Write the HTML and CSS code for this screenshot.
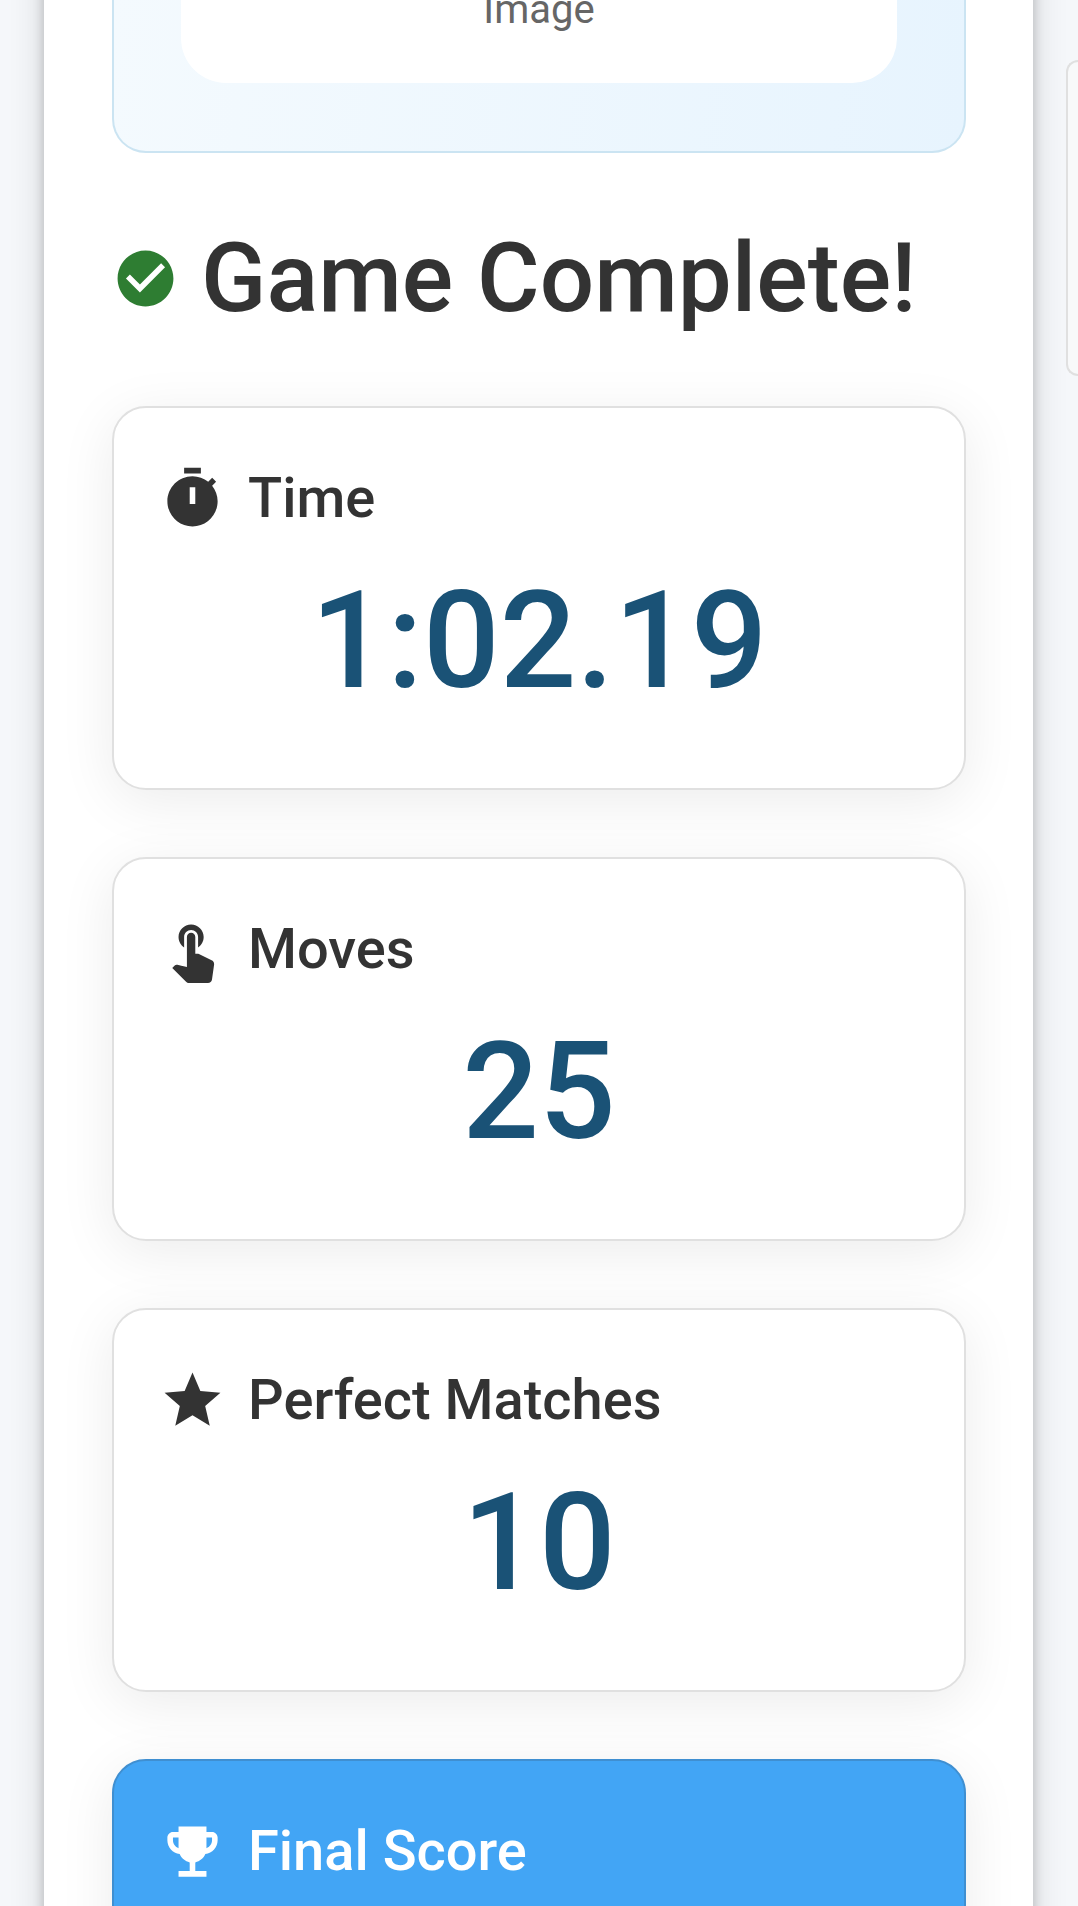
FILE: index.html
```html
<!DOCTYPE html>
<html lang="en">
<head>
  <meta charset="UTF-8">
  <meta name="viewport" content="width=device-width, initial-scale=1.0">
  <title>Game Complete</title>
  <link rel="stylesheet" href="styles.css">
</head>
<body>
  <main class="panel">
    <section class="preview">
      <div class="preview-inner">
        <p class="preview-label">Image</p>
      </div>
    </section>

    <h1 class="page-title">
      <svg class="icon icon-success" viewBox="0 0 24 24" aria-hidden="true"><path d="M12 2C6.48 2 2 6.48 2 12s4.48 10 10 10 10-4.48 10-10S17.52 2 12 2zm-2 15-5-5 1.41-1.41L10 14.17l7.59-7.59L19 8l-9 9z"/></svg>
      Game Complete!
    </h1>

    <div class="stats">
      <section class="card">
        <h2 class="card-title">
          <svg class="icon" viewBox="0 0 24 24" aria-hidden="true"><path d="M9 1h6v2H9zm10.03 6.39 1.42-1.42c-.43-.51-.9-.99-1.41-1.41l-1.42 1.42C16.07 4.74 14.12 4 12 4c-4.97 0-9 4.03-9 9s4.02 9 9 9 9-4.03 9-9c0-2.12-.74-4.07-1.97-5.61M13 14h-2V8h2z"/></svg>
          Time
        </h2>
        <p class="card-value">1:02.19</p>
      </section>

      <section class="card">
        <h2 class="card-title">
          <svg class="icon" viewBox="0 0 24 24" aria-hidden="true"><path d="M9 11.24V7.5C9 6.12 10.12 5 11.5 5S14 6.12 14 7.5v3.74c1.21-.81 2-2.18 2-3.74C16 5.01 13.99 3 11.5 3S7 5.01 7 7.5c0 1.56.79 2.93 2 3.74m9.84 4.63-4.54-2.26c-.17-.07-.35-.11-.54-.11H13v-6c0-.83-.67-1.5-1.5-1.5S10 6.67 10 7.5v10.74c-3.6-.76-3.54-.75-3.67-.75-.31 0-.59.13-.79.33l-.79.8 4.94 4.94c.27.27.65.44 1.06.44h6.79c.75 0 1.33-.55 1.44-1.28l.75-5.27c.01-.07.02-.14.02-.2 0-.62-.38-1.16-.91-1.38"/></svg>
          Moves
        </h2>
        <p class="card-value">25</p>
      </section>

      <section class="card">
        <h2 class="card-title">
          <svg class="icon" viewBox="0 0 24 24" aria-hidden="true"><path d="M12 17.27 18.18 21l-1.64-7.03L22 9.24l-7.19-.61L12 2 9.19 8.63 2 9.24l5.46 4.73L5.82 21z"/></svg>
          Perfect Matches
        </h2>
        <p class="card-value">10</p>
      </section>

      <section class="card card-score">
        <h2 class="card-title">
          <svg class="icon" viewBox="0 0 24 24" aria-hidden="true"><path d="M19 5h-2V3H7v2H5c-1.1 0-2 .9-2 2v1c0 2.55 1.92 4.63 4.39 4.94.63 1.5 1.98 2.63 3.61 2.96V19H7v2h10v-2h-4v-3.1c1.63-.33 2.98-1.46 3.61-2.96C19.08 12.63 21 10.55 21 8V7c0-1.1-.9-2-2-2M5 8V7h2v3.82C5.84 10.4 5 9.3 5 8m14 0c0 1.3-.84 2.4-2 2.82V7h2z"/></svg>
          Final Score
        </h2>
      </section>
    </div>
  </main>
  <aside class="side">
    <div class="side-box"></div>
  </aside>
</body>
</html>
```

FILE: styles.css
```css
* {
  box-sizing: border-box;
}
body {
  display: flex;
  gap: 33px;
  height: 100vh;
  margin: 0;
  padding-left: 44px;
  overflow: hidden;
  background-color: #f5f7fa;
  color: #333;
  font-family: Roboto, sans-serif;
}
h1, h2, p {
  margin: 0;
}
/* The panel runs past both edges so its shadow has no visible corner */
.panel {
  flex: 1;
  margin: -68px 0;
  padding: 68px 67px 68px 68px;
  background-color: white;
  box-shadow: 0 8px 11px rgba(0, 0, 0, 0.2), 0 3px 34px rgba(0, 0, 0, 0.14);
}

/* Preview, scrolled partly out of view */
.preview {
  padding: 0 67px 68px;
  border: 2px solid #cbe4f2;
  border-top: none;
  border-radius: 0 0 34px 34px;
  background: linear-gradient(95deg, #f4fafe, #e7f4fe);
}
.preview-inner {
  padding-bottom: 45px;
  border-radius: 0 0 45px 45px;
  background-color: white;
}
.preview-label {
  margin-top: -19px;
  color: #666;
  font-size: 40px;
  line-height: 57px;
  text-align: center;
}

.page-title {
  display: flex;
  align-items: center;
  gap: 22px;
  margin: 66px 0 68px;
  font-size: 96px;
  font-weight: 500;
  line-height: 119px;
  white-space: nowrap;
}
.icon {
  flex: none;
  width: 67px;
  height: 67px;
  fill: currentColor;
}
.icon-success {
  color: #2e7d32;
}

.stats {
  display: flex;
  flex-direction: column;
  gap: 67px;
}
.card {
  padding: 45px 45px 67px;
  border: 2px solid #e0e0e0;
  border-radius: 34px;
  background-color: white;
  box-shadow: 0 11px 56px rgba(0, 0, 0, 0.08);
}
.card-title {
  display: flex;
  align-items: center;
  gap: 22px;
  margin-bottom: 19px;
  font-size: 56px;
  font-weight: 500;
  line-height: 90px;
}
.card-value {
  color: #1a5276;
  font-size: 135px;
  font-weight: 500;
  line-height: 159px;
  text-align: center;
}
.card-score {
  min-height: 384px;
  border-color: #3f8fd1;
  background-color: #42a5f5;
  color: white;
}

.side {
  width: 12px;
  padding-top: 60px;
  overflow: hidden;
}
.side-box {
  height: 316px;
  border: 2px solid #e0e0e0;
  border-right: none;
  border-radius: 12px 0 0 12px;
  background-color: #f8f9fa;
}
```
